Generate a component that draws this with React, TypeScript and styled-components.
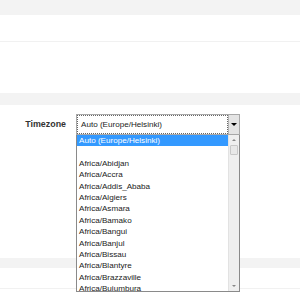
import React from "react";
import styled, { createGlobalStyle } from "styled-components";

const Global = createGlobalStyle`
  html, body { margin: 0; padding: 0; background: #f3f3f3; }
  body { font-family: "Liberation Sans", Arial, sans-serif; overflow: hidden; }
`;

const Page = styled.div`
  width: 300px;
  height: 300px;
  display: flex;
  flex-direction: column;
  background: #f3f3f3;
  padding-top: 15px;
  box-sizing: border-box;
  overflow: hidden;
`;

const Panel = styled.div<{ $h?: number; $gapAfter?: number }>`
  background: #ffffff;
  height: ${(p) => (p.$h ? `${p.$h}px` : "auto")};
  margin-bottom: ${(p) => p.$gapAfter ?? 0}px;
  display: flex;
  flex-direction: column;
  flex-shrink: 0;
  position: relative;
`;

const PanelRow = styled.div<{ $h: number; $line?: boolean }>`
  height: ${(p) => p.$h}px;
  border-bottom: ${(p) => (p.$line ? "1px solid #f1f1f1" : "none")};
  flex-shrink: 0;
`;

const FormRow = styled.div`
  display: flex;
  align-items: flex-start;
  padding-top: 9px;
`;

const Label = styled.div`
  width: 66px;
  margin-right: 10px;
  text-align: right;
  font-weight: bold;
  font-size: 8.9px;
  color: #333333;
  line-height: 21px;
`;

const SelectWrap = styled.div`
  position: relative;
  width: 164px;
`;

const SelectBox = styled.div`
  height: 21px;
  display: flex;
  box-sizing: border-box;
  border: 1px solid #a8a8a8;
  background: #fff;
`;

const SelectText = styled.div`
  flex: 1;
  border: 1px dotted #666;
  font-size: 8.1px;
  color: #222;
  line-height: 17px;
  padding-left: 3px;
  white-space: nowrap;
  overflow: hidden;
`;

const SelectButton = styled.div`
  width: 10px;
  background: #e4e4e4;
  border-left: 1px solid #b4b4b4;
  display: flex;
  align-items: center;
  justify-content: center;
`;

const ArrowDown = styled.div<{ $color?: string; $size?: number }>`
  width: 0;
  height: 0;
  border-left: ${(p) => p.$size ?? 3}px solid transparent;
  border-right: ${(p) => p.$size ?? 3}px solid transparent;
  border-top: ${(p) => p.$size ?? 3}px solid ${(p) => p.$color ?? "#000"};
`;

const ArrowUp = styled.div<{ $color?: string; $size?: number }>`
  width: 0;
  height: 0;
  border-left: ${(p) => p.$size ?? 2}px solid transparent;
  border-right: ${(p) => p.$size ?? 2}px solid transparent;
  border-bottom: ${(p) => p.$size ?? 2}px solid ${(p) => p.$color ?? "#888"};
`;

const Dropdown = styled.div`
  position: absolute;
  top: 21px;
  left: 0;
  width: 164px;
  height: 157px;
  box-sizing: border-box;
  border: 1px solid #8a8a8a;
  border-top: none;
  background: #fff;
  display: flex;
  overflow: hidden;
  z-index: 5;
`;

const Options = styled.div`
  flex: 1;
  overflow: hidden;
`;

const Option = styled.div<{ $selected?: boolean }>`
  height: 11.4px;
  line-height: 11.4px;
  font-size: 8.1px;
  padding-left: 2px;
  white-space: nowrap;
  color: ${(p) => (p.$selected ? "#fff" : "#222")};
  background: ${(p) => (p.$selected ? "#3399ff" : "transparent")};
`;

const Scrollbar = styled.div`
  width: 10px;
  background: #efefef;
  border-left: 1px solid #e2e2e2;
  display: flex;
  flex-direction: column;
  align-items: center;
`;

const ScrollBtn = styled.div`
  height: 10px;
  width: 100%;
  display: flex;
  align-items: center;
  justify-content: center;
`;

const Thumb = styled.div`
  width: 8px;
  height: 10px;
  box-sizing: border-box;
  background: #e8e8e8;
  border: 1px solid #c8c8c8;
  border-radius: 1px;
`;

const Track = styled.div`
  flex: 1;
`;

const options = [
  "Auto (Europe/Helsinki)",
  "",
  "Africa/Abidjan",
  "Africa/Accra",
  "Africa/Addis_Ababa",
  "Africa/Algiers",
  "Africa/Asmara",
  "Africa/Bamako",
  "Africa/Bangui",
  "Africa/Banjul",
  "Africa/Bissau",
  "Africa/Blantyre",
  "Africa/Brazzaville",
  "Africa/Bujumbura",
];

export default function App() {
  return (
    <>
      <Global />
      <Page>
        <Panel $h={78} $gapAfter={12}>
          <PanelRow $h={26} $line />
          <PanelRow $h={51} />
        </Panel>
        <Panel $h={153} $gapAfter={10}>
          <FormRow>
            <Label>Timezone</Label>
            <SelectWrap>
              <SelectBox>
                <SelectText>Auto (Europe/Helsinki)</SelectText>
                <SelectButton>
                  <ArrowDown $size={3} />
                </SelectButton>
              </SelectBox>
              <Dropdown>
                <Options>
                  {options.map((o, i) => (
                    <Option key={i} $selected={i === 0}>
                      {o || "\u00a0"}
                    </Option>
                  ))}
                </Options>
                <Scrollbar>
                  <ScrollBtn>
                    <ArrowUp $size={2} />
                  </ScrollBtn>
                  <Thumb />
                  <Track />
                  <ScrollBtn>
                    <ArrowDown $size={2} $color="#888" />
                  </ScrollBtn>
                </Scrollbar>
              </Dropdown>
            </SelectWrap>
          </FormRow>
        </Panel>
        <Panel $h={60}>
          <PanelRow $h={20} $line />
        </Panel>
      </Page>
    </>
  );
}
